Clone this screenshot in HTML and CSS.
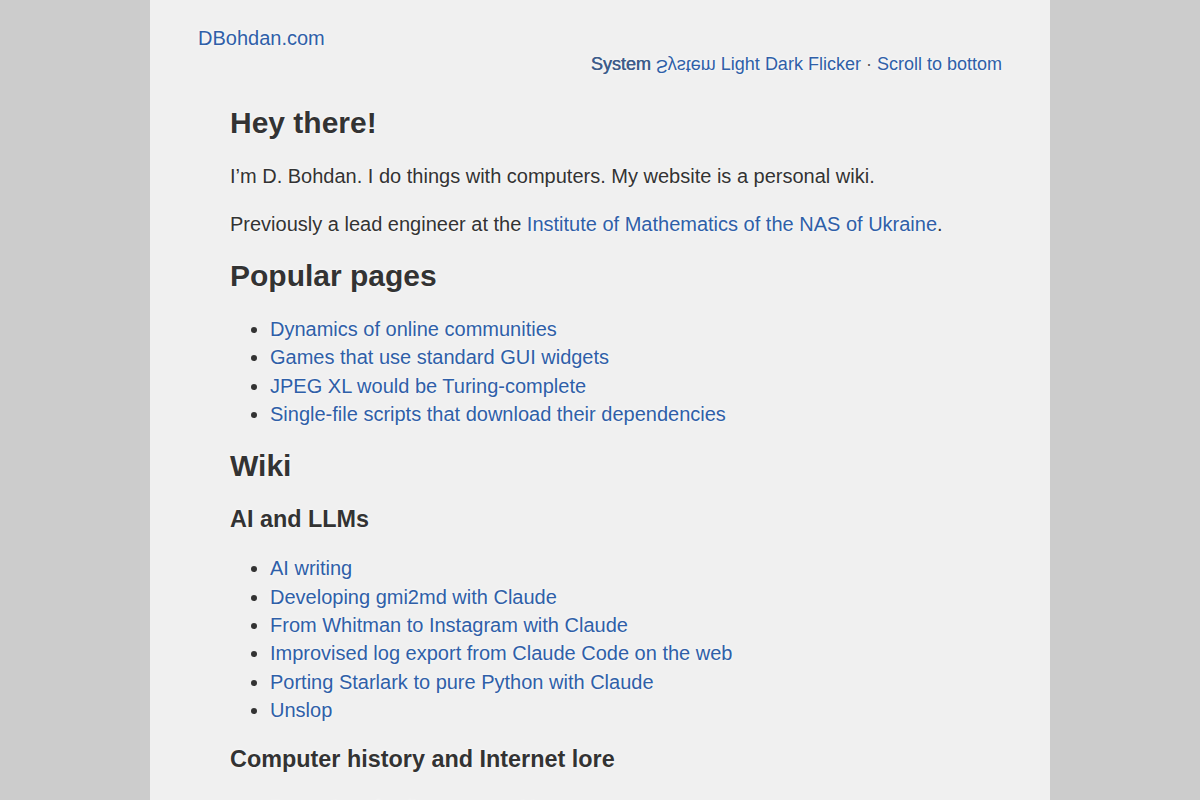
FILE: index.html
```html
<!DOCTYPE html>
<html lang="en">
<head>
<meta charset="utf-8">
<title>DBohdan.com</title>
<link rel="stylesheet" href="styles.css">
</head>
<body>
<div class="page">
  <header class="header">
    <a class="site" href="#">DBohdan.com</a>
    <nav class="nav">
      <span class="mode current">System</span>
      <a class="mode flip" href="#">System</a>
      <a class="mode" href="#">Light</a>
      <a class="mode" href="#">Dark</a>
      <a class="mode" href="#">Flicker</a>
      <span class="sep">·</span>
      <a href="#">Scroll to bottom</a>
    </nav>
  </header>
  <main class="content">
    <h2>Hey there!</h2>
    <p>I’m D. Bohdan. I do things with computers. My website is a personal wiki.</p>
    <p>Previously a lead engineer at the <a href="#">Institute of Mathematics of the NAS of Ukraine</a>.</p>
    <h2>Popular pages</h2>
    <ul>
      <li><a href="#">Dynamics of online communities</a></li>
      <li><a href="#">Games that use standard GUI widgets</a></li>
      <li><a href="#">JPEG XL would be Turing-complete</a></li>
      <li><a href="#">Single-file scripts that download their dependencies</a></li>
    </ul>
    <h2>Wiki</h2>
    <h3>AI and LLMs</h3>
    <ul>
      <li><a href="#">AI writing</a></li>
      <li><a href="#">Developing gmi2md with Claude</a></li>
      <li><a href="#">From Whitman to Instagram with Claude</a></li>
      <li><a href="#">Improvised log export from Claude Code on the web</a></li>
      <li><a href="#">Porting Starlark to pure Python with Claude</a></li>
      <li><a href="#">Unslop</a></li>
    </ul>
    <h3>Computer history and Internet lore</h3>
    <ul>
      <li><a href="#">Dynamics of online communities</a></li>
      <li><a href="#">Games that use standard GUI widgets</a></li>
    </ul>
  </main>
</div>
</body>
</html>
```

FILE: styles.css
```css
html, body {
  margin: 0;
  padding: 0;
  background: #cccccc;
}
body {
  font-family: "Liberation Sans", Arial, sans-serif;
  font-size: 20px;
  line-height: 1.42;
  color: #333333;
  text-shadow: 0 0 3px #ffffff;
}
a {
  color: #2f5fa8;
  text-decoration: none;
}
.page {
  width: 900px;
  margin: 0 auto;
  background: #f0f0f0;
  min-height: 800px;
  box-sizing: border-box;
  padding: 24px 48px 20px;
}
.header {
  display: flex;
  flex-direction: column;
}
.site {
  align-self: flex-start;
}
.nav {
  align-self: flex-end;
  font-size: 18px;
  line-height: 1.42;
}
.nav .current {
  color: #3d5c8a;
  text-shadow: 0.6px 0 0 #3d5c8a, 0 0 3px #ffffff;
}
.nav .flip {
  display: inline-block;
  transform: scaleY(-1);
}
.nav .sep {
  color: #555;
}
.content {
  padding: 0 32px;
  margin-top: 27px;
}
h2 {
  font-size: 30px;
  line-height: 1.22;
  margin: 20px 0;
}
.content > h2:first-child {
  margin-top: 0;
}
h3 {
  font-size: 23.4px;
  line-height: 1.25;
  margin: 20px 0;
}
p {
  margin: 20px 0;
}
ul {
  margin: 20px 0;
  padding-left: 40px;
}
```
